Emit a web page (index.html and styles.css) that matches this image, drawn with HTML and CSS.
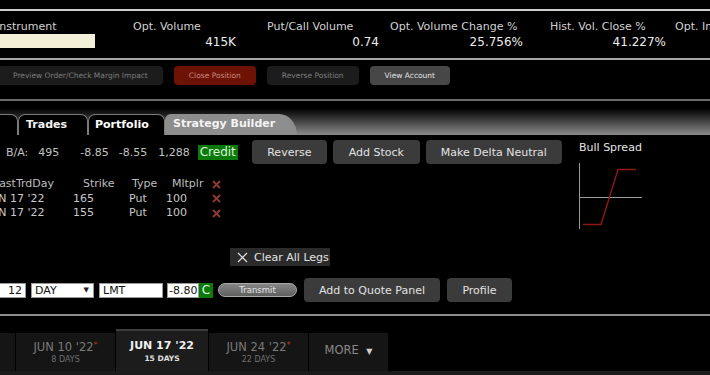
FILE: index.html
```html
<!DOCTYPE html>
<html lang="en">
<head>
    <meta charset="UTF-8">
    <meta name="viewport" content="width=device-width, initial-scale=1.0">
    <title>Strategy Builder</title>
    <link rel="stylesheet" href="styles.css">
</head>
<body>
    <div class="topline"></div>

    <div class="quote">
        <div class="q-col q-instr">
            <div class="q-label">Instrument</div>
            <div class="instr-box"></div>
        </div>
        <div class="q-col q-optvol">
            <div class="q-label">Opt. Volume</div>
            <div class="q-value">415K</div>
        </div>
        <div class="q-col q-pc">
            <div class="q-label">Put/Call Volume</div>
            <div class="q-value">0.74</div>
        </div>
        <div class="q-col q-chg">
            <div class="q-label">Opt. Volume Change %</div>
            <div class="q-value">25.756%</div>
        </div>
        <div class="q-col q-hist">
            <div class="q-label">Hist. Vol. Close %</div>
            <div class="q-value">41.227%</div>
        </div>
        <div class="q-col q-imp">
            <div class="q-label">Opt. Implied Vol. %</div>
        </div>
    </div>

    <div class="actions">
        <button class="act-btn first">Preview Order/Check Margin Impact</button>
        <button class="act-btn danger">Close Position</button>
        <button class="act-btn">Reverse Position</button>
        <button class="act-btn light">View Account</button>
    </div>

    <div class="tabbar">
        <div class="tab tab-cut"></div>
        <div class="tab tab-trades">Trades</div>
        <div class="tab tab-portfolio">Portfolio</div>
        <div class="tab tab-active">Strategy Builder</div>
    </div>

    <div class="builder">
        <div class="builder-top">
            <div class="builder-left">
                <div class="ba-row">
                    <span class="ba-label">B/A:</span>
                    <span class="ba-size">495</span>
                    <span class="ba-bid">-8.85</span>
                    <span class="ba-ask">-8.55</span>
                    <span class="ba-vol">1,288</span>
                    <span class="credit">Credit</span>
                    <button class="btn btn-reverse">Reverse</button>
                    <button class="btn btn-stock">Add Stock</button>
                    <button class="btn btn-delta">Make Delta Neutral</button>
                </div>

                <div class="legs">
                    <div class="lh lh-date">LastTrdDay</div>
                    <div class="lh lh-strike">Strike</div>
                    <div class="lh lh-type">Type</div>
                    <div class="lh lh-mult">Mltplr</div>
                    <div class="rm"><svg width="9" height="9" viewBox="0 0 9 9"><path d="M1 1L8 8M8 1L1 8" stroke="#8c3a31" stroke-width="2"/></svg></div>

                    <div>JUN 17 '22</div>
                    <div>165</div>
                    <div>Put</div>
                    <div>100</div>
                    <div class="rm"><svg width="9" height="9" viewBox="0 0 9 9"><path d="M1 1L8 8M8 1L1 8" stroke="#8c3a31" stroke-width="2"/></svg></div>

                    <div>JUN 17 '22</div>
                    <div>155</div>
                    <div>Put</div>
                    <div>100</div>
                    <div class="rm"><svg width="9" height="9" viewBox="0 0 9 9"><path d="M1 1L8 8M8 1L1 8" stroke="#8c3a31" stroke-width="2"/></svg></div>
                </div>
            </div>

            <div class="payoff">
                <div class="payoff-title">Bull Spread</div>
                <svg class="payoff-chart" width="70" height="72" viewBox="0 0 70 72">
                    <path d="M4.5 3V69" stroke="#9a9a9a" stroke-width="1" fill="none"/>
                    <path d="M4 37.5H67" stroke="#9a9a9a" stroke-width="1" fill="none"/>
                    <path d="M8 64.5H26L43 9.5H61" stroke="#8e1a10" stroke-width="1.4" fill="none"/>
                </svg>
            </div>
        </div>

        <div class="clear-row">
            <div class="clear-btn">
                <svg width="11" height="11" viewBox="0 0 11 11"><path d="M1 1L10 10M10 1L1 10" stroke="#e0e0e0" stroke-width="1.2"/></svg>
                <span>Clear All Legs</span>
            </div>
        </div>

        <div class="order-row">
            <input class="field f-qty" type="text" value="12">
            <div class="field f-tif"><span>DAY</span><span class="caret">&#9660;</span></div>
            <input class="field f-type" type="text" value="LMT">
            <input class="field f-price" type="text" value="-8.80">
            <span class="cflag">C</span>
            <button class="transmit">Transmit</button>
            <button class="btn btn-quote">Add to Quote Panel</button>
            <button class="btn btn-profile">Profile</button>
        </div>
    </div>

    <div class="rule"></div>

    <div class="expiries">
        <div class="exp exp-cut"></div>
        <div class="exp exp-wide">
            <div class="exp-date">JUN 10 '22<span class="star">*</span></div>
            <div class="exp-days">8 DAYS</div>
        </div>
        <div class="exp exp-active">
            <div class="exp-date">JUN 17 '22</div>
            <div class="exp-days">15 DAYS</div>
        </div>
        <div class="exp exp-wide">
            <div class="exp-date">JUN 24 '22<span class="star">*</span></div>
            <div class="exp-days">22 DAYS</div>
        </div>
        <div class="exp exp-more">MORE <span class="more-caret">&#9660;</span></div>
    </div>
    <div class="strip"></div>
</body>
</html>
```
FILE: styles.css
```css
body {
    margin: 0;
    width: 710px;
    height: 375px;
    overflow: hidden;
    background: #000;
    color: #cacaca;
    font-family: "DejaVu Sans", Verdana, sans-serif;
    font-size: 11px;
}

button, input {
    font-family: inherit;
}

/* quote header */
.topline {
    height: 9px;
    border-bottom: 2px solid #cdcdcd;
}

.quote {
    display: flex;
    height: 38px;
    padding-top: 9px;
    border-bottom: 2px solid #a6a6a6;
    white-space: nowrap;
}

.q-col {
    display: flex;
    flex-direction: column;
    flex: none;
}

.q-label {
    line-height: 14px;
    color: #d2d2d2;
}

.q-value {
    line-height: 16px;
    font-size: 12px;
    color: #ececec;
    text-align: right;
}

.q-instr { width: 137px; margin-left: -4px; }
.q-optvol { width: 103px; margin-right: 31px; }
.q-pc { width: 112px; margin-right: 11px; }
.q-chg { width: 133px; margin-right: 27px; }
.q-hist { width: 116px; margin-right: 9px; }

.instr-box {
    width: 99px;
    height: 14px;
    background: #f4f0d7;
}

/* order actions */
.actions {
    display: flex;
    gap: 11px;
    height: 33px;
    padding-top: 6px;
    border-bottom: 2px solid #6a6a6a;
}

.act-btn {
    height: 19px;
    padding: 0 15px;
    border: none;
    border-radius: 4px;
    background: #1c1c1c;
    color: #7d7d7d;
    font-size: 7.5px;
    line-height: 19px;
    white-space: nowrap;
}

.act-btn.first { margin-left: -2px; }
.act-btn.danger { background: #6d1306; color: #c98a7e; }
.act-btn.light { background: #474747; color: #e2e2e2; }

/* tabs */
.tabbar {
    display: flex;
    align-items: flex-end;
    height: 34px;
    background: linear-gradient(#000 0%, #000 22%, #8b8b8b 100%);
}

.tab {
    height: 21px;
    box-sizing: border-box;
    border: 1px solid #7a7a7a;
    border-bottom: none;
    border-radius: 7px 7px 0 0;
    background: #000;
    color: #f2f2f2;
    font-weight: bold;
    line-height: 20px;
    flex: none;
}

.tab-cut { width: 40px; margin-left: -22px; }
.tab-trades { width: 70px; padding-left: 7px; }
.tab-portfolio { width: 77px; padding-left: 6px; color: #fff; }

.tab-active {
    width: 132px;
    padding-left: 8px;
    border: none;
    border-radius: 6px 18px 0 0 / 6px 21px 0 0;
    background: #8d8d8d;
    color: #f4f4f4;
}

/* strategy builder */
.builder-top {
    display: flex;
    padding-top: 5px;
}

.builder-left {
    width: 579px;
    flex: none;
}

.ba-row {
    display: flex;
    align-items: center;
    height: 24px;
    color: #c2c2c2;
}

.ba-label { margin-left: 6px; }
.ba-size { margin-left: 10px; }
.ba-bid { margin-left: 21px; }
.ba-ask { margin-left: 10px; }
.ba-vol { margin-left: 11px; }

.credit {
    margin-left: 8px;
    padding: 0 2px;
    background: #0b7a0b;
    color: #d9f2d9;
    font-size: 12px;
    line-height: 15px;
}

.btn {
    height: 24px;
    padding: 0;
    border: none;
    border-radius: 4px;
    background: #3b3b3b;
    color: #e2e2e2;
    font-size: 11px;
    white-space: nowrap;
}

.btn-reverse { width: 75px; margin-left: 14px; }
.btn-stock { width: 87px; margin-left: 6px; }
.btn-delta { width: 136px; margin-left: 6px; }

.legs {
    display: grid;
    grid-template-columns: 86px 56px 37px 46px 20px;
    grid-auto-rows: 14.5px;
    margin-top: 13px;
    margin-left: -13px;
    line-height: 14px;
    color: #c8c8c8;
    white-space: nowrap;
}

.lh { color: #bdbdbd; }
.lh-date { padding-left: 6px; }
.lh-strike { padding-left: 10px; }
.lh-type { padding-left: 3px; }
.lh-mult { padding-left: 6px; }

.rm {
    display: flex;
    align-items: center;
}

.payoff {
    flex: none;
}

.payoff-title {
    margin-top: 1px;
    line-height: 14px;
    color: #e4e4e4;
}

.payoff-chart {
    display: block;
    margin-top: 5px;
    margin-left: -4px;
}

.clear-row {
    margin-top: 16px;
}

.clear-btn {
    display: flex;
    align-items: center;
    gap: 6px;
    width: 100px;
    height: 18px;
    margin-left: 230px;
    padding-left: 7px;
    box-sizing: border-box;
    background: #2b2b2b;
    color: #e2e2e2;
    white-space: nowrap;
}

.order-row {
    display: flex;
    align-items: center;
    height: 24px;
    margin-top: 12px;
}

.field {
    height: 15px;
    box-sizing: border-box;
    margin: 0;
    padding: 0 3px;
    border: 1px solid #9a9a9a;
    border-radius: 0;
    background: #fff;
    color: #111;
    font-size: 11px;
    line-height: 13px;
    outline: none;
}

.f-qty { width: 40px; margin-left: -14px; text-align: right; }
.f-tif {
    display: flex;
    justify-content: space-between;
    width: 63px;
    margin-left: 5px;
}
.caret { font-size: 7px; color: #222; padding-right: 1px; }
.f-type { width: 64px; margin-left: 5px; }
.f-price { width: 32px; margin-left: 4px; padding: 0 1px; text-align: right; }

.cflag {
    width: 14px;
    height: 15px;
    background: #0b7a0b;
    color: #e8f5e8;
    font-size: 12px;
    line-height: 15px;
    text-align: center;
}

.transmit {
    width: 79px;
    height: 14px;
    margin-left: 5px;
    padding: 0;
    border: 1px solid #a8a8a8;
    border-radius: 8px;
    background: linear-gradient(#868686, #5f5f5f);
    color: #e4e4e4;
    font-size: 8.5px;
    line-height: 12px;
}

.btn-quote { width: 136px; margin-left: 7px; }
.btn-profile { width: 65px; margin-left: 7px; }

.rule {
    margin-top: 12px;
    border-top: 2px solid #8d8d8d;
}

/* expiry tabs */
.expiries {
    display: flex;
    align-items: flex-end;
    height: 42px;
    padding-top: 13px;
}

.exp {
    height: 38px;
    box-sizing: border-box;
    margin-right: 1px;
    padding-top: 6px;
    background: #151515;
    text-align: center;
    flex: none;
}

.exp-cut { width: 15px; }
.exp-wide { width: 99px; }

.exp-date {
    font-size: 11.5px;
    line-height: 14px;
    color: #7a7a7a;
    white-space: nowrap;
}

.exp-days {
    font-size: 8px;
    line-height: 11px;
    color: #707070;
}

.star {
    font-size: 8px;
    color: #b8332b;
    vertical-align: 3px;
}

.exp-active {
    width: 92px;
    height: 42px;
    padding-top: 8px;
    border-top: 2px solid #3d3d3d;
    background: #1c1c1c;
}

.exp-active .exp-date {
    color: #f0f0f0;
    font-weight: bold;
    font-size: 11px;
}

.exp-active .exp-days {
    color: #e0e0e0;
    font-weight: bold;
    font-size: 7.5px;
}

.exp-more {
    width: 79px;
    padding-top: 10px;
    color: #8a8a8a;
    font-size: 11.5px;
    line-height: 14px;
}

.more-caret {
    font-size: 8px;
    margin-left: 4px;
    color: #d0d0d0;
}

.strip {
    height: 4px;
    background: #1b1b1b;
}
```
